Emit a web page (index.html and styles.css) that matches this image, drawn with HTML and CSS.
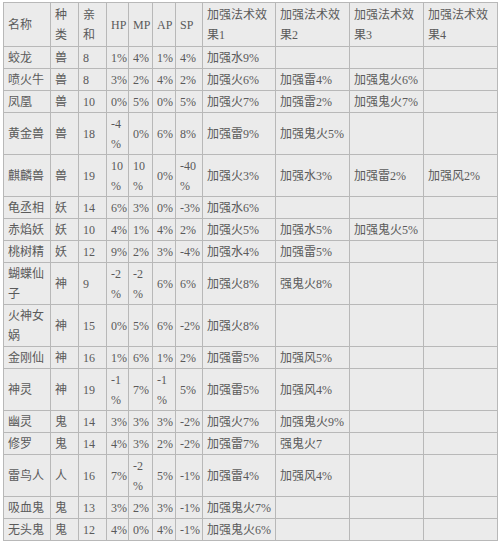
FILE: index.html
```html
<!DOCTYPE html>
<html lang="zh">
<head>
<meta charset="utf-8">
<title>召唤兽</title>
<link rel="stylesheet" href="styles.css">
</head>
<body>
<table class="pets">
<colgroup>
<col class="c-name"><col class="c-kind"><col class="c-aff"><col class="c-hp"><col class="c-mp"><col class="c-ap"><col class="c-sp"><col class="c-e1"><col class="c-e"><col class="c-e"><col class="c-e">
</colgroup>
<tr class="head"><td>名称</td><td>种<br>类</td><td>亲<br>和</td><td>HP</td><td>MP</td><td>AP</td><td>SP</td><td>加强法术效<br>果1</td><td>加强法术效<br>果2</td><td>加强法术效<br>果3</td><td>加强法术效<br>果4</td></tr>
<tr><td>蛟龙</td><td>兽</td><td>8</td><td>1%</td><td>4%</td><td>1%</td><td>4%</td><td>加强水9%</td><td></td><td></td><td></td></tr>
<tr><td>喷火牛</td><td>兽</td><td>8</td><td>3%</td><td>2%</td><td>4%</td><td>2%</td><td>加强火6%</td><td>加强雷4%</td><td>加强鬼火6%</td><td></td></tr>
<tr><td>凤凰</td><td>兽</td><td>10</td><td>0%</td><td>5%</td><td>0%</td><td>5%</td><td>加强火7%</td><td>加强雷2%</td><td>加强鬼火7%</td><td></td></tr>
<tr><td>黄金兽</td><td>兽</td><td>18</td><td>-4<br>%</td><td>0%</td><td>6%</td><td>8%</td><td>加强雷9%</td><td>加强鬼火5%</td><td></td><td></td></tr>
<tr><td>麒麟兽</td><td>兽</td><td>19</td><td>10<br>%</td><td>10<br>%</td><td>0%</td><td>-40<br>%</td><td>加强火3%</td><td>加强水3%</td><td>加强雷2%</td><td>加强风2%</td></tr>
<tr><td>龟丞相</td><td>妖</td><td>14</td><td>6%</td><td>3%</td><td>0%</td><td>-3%</td><td>加强水6%</td><td></td><td></td><td></td></tr>
<tr><td>赤焰妖</td><td>妖</td><td>10</td><td>4%</td><td>1%</td><td>4%</td><td>2%</td><td>加强火5%</td><td>加强水5%</td><td>加强鬼火5%</td><td></td></tr>
<tr><td>桃树精</td><td>妖</td><td>12</td><td>9%</td><td>2%</td><td>3%</td><td>-4%</td><td>加强水4%</td><td>加强雷5%</td><td></td><td></td></tr>
<tr><td>蝴蝶仙<br>子</td><td>神</td><td>9</td><td>-2<br>%</td><td>-2<br>%</td><td>6%</td><td>6%</td><td>加强火8%</td><td>强鬼火8%</td><td></td><td></td></tr>
<tr><td>火神女<br>娲</td><td>神</td><td>15</td><td>0%</td><td>5%</td><td>6%</td><td>-2%</td><td>加强火8%</td><td></td><td></td><td></td></tr>
<tr><td>金刚仙</td><td>神</td><td>16</td><td>1%</td><td>6%</td><td>1%</td><td>2%</td><td>加强雷5%</td><td>加强风5%</td><td></td><td></td></tr>
<tr><td>神灵</td><td>神</td><td>19</td><td>-1<br>%</td><td>7%</td><td>-1<br>%</td><td>5%</td><td>加强雷5%</td><td>加强风4%</td><td></td><td></td></tr>
<tr><td>幽灵</td><td>鬼</td><td>14</td><td>3%</td><td>3%</td><td>3%</td><td>-2%</td><td>加强火7%</td><td>加强鬼火9%</td><td></td><td></td></tr>
<tr><td>修罗</td><td>鬼</td><td>14</td><td>4%</td><td>3%</td><td>2%</td><td>-2%</td><td>加强雷7%</td><td>强鬼火7</td><td></td><td></td></tr>
<tr><td>雷鸟人</td><td>人</td><td>16</td><td>7%</td><td>-2<br>%</td><td>5%</td><td>-1%</td><td>加强雷4%</td><td>加强风4%</td><td></td><td></td></tr>
<tr><td>吸血鬼</td><td>鬼</td><td>13</td><td>3%</td><td>2%</td><td>3%</td><td>-1%</td><td>加强鬼火7%</td><td></td><td></td><td></td></tr>
<tr><td>无头鬼</td><td>鬼</td><td>12</td><td>4%</td><td>0%</td><td>4%</td><td>-1%</td><td>加强鬼火6%</td><td></td><td></td><td></td></tr>
</table>
</body>
</html>
```
FILE: styles.css
```css
html, body {
  background: #ffffff;
}
body {
  margin: 2px 0 0 3px;
  font-family: "Liberation Serif", "Noto Sans CJK SC", serif;
  font-size: 12px;
  color: #5a5a5a;
}
.pets {
  border-collapse: collapse;
  table-layout: fixed;
  width: 495px;
}
.pets td {
  border: 1px solid #b8b8b8;
  background: #ebebeb;
  padding: 1px 3px 0 4px;
  line-height: 20px;
  vertical-align: middle;
  white-space: nowrap;
  overflow: hidden;
}
.pets .head td {
  padding-top: 2px;
  padding-bottom: 1px;
}
.c-name { width: 47px; }
.c-kind { width: 28px; }
.c-aff { width: 28px; }
.c-hp { width: 22px; }
.c-mp { width: 24px; }
.c-ap { width: 23px; }
.c-sp { width: 27px; }
.c-e1 { width: 73px; }
.c-e { width: 74px; }
```
